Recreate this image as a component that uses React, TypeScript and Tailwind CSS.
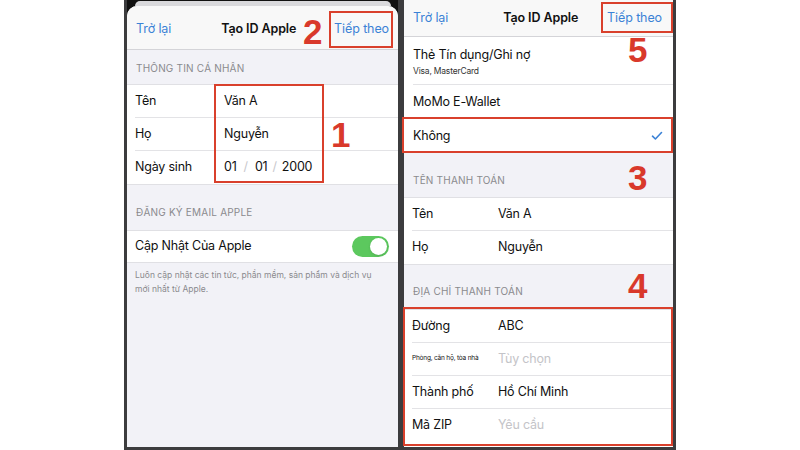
import React from 'react';

const ui = { fontFamily: 'Inter, "Noto Sans", sans-serif' };
const num = { fontFamily: '"Liberation Sans", Arial, sans-serif' };

const Row = ({ label, value, last, labelClass = 'text-[12.5px]', valueClass = 'text-[#111]', valueX = 'w-[89px]' }: any) => (
    <div className="flex h-[33px] items-center pl-[8px]">
        <div className={`flex h-full flex-1 items-center tracking-[-0.2px] ${last ? '' : 'border-b border-[#e3e3e6]'}`}>
            <span className={`${valueX} shrink-0 text-[#111] ${labelClass}`}>{label}</span>
            <span className={`text-[12.5px] ${valueClass}`}>{value}</span>
        </div>
    </div>
);

const Header = ({ text, h, pb }: { text: string; h: string; pb: string }) => (
    <div className={`flex items-end pl-[9px] text-[10px] uppercase tracking-[0.2px] text-[#8a8a8e] ${h} ${pb}`}>{text}</div>
);

const Num = ({ n, className }: { n: string; className: string }) => (
    <span className={`absolute text-[35px] font-bold leading-none text-[#d9392b] ${className}`} style={num}>{n}</span>
);

const Box = ({ className }: { className: string }) => (
    <div className={`absolute border-[2.5px] border-[#d9402c] ${className}`} />
);

const LeftPhone = () => (
    <div className="relative flex h-[450px] w-[277px] flex-col border-b-[3px] border-l-[3px] border-r-[3px] border-[#3c3c3e] bg-[#111]">
        <div className="flex h-[6px] shrink-0 justify-center bg-[#111]">
            <div className="mt-[1px] w-[256px] rounded-t-[8px] bg-[#d9d9dc]" />
        </div>
        <div className="flex flex-1 flex-col overflow-hidden rounded-t-[10px] bg-[#f2f2f7]">
            <div className="flex h-[44px] shrink-0 items-center border-b border-[#d4d4d8] bg-[#f8f8f8] px-[9px] pt-[4px] text-[12.5px] tracking-[-0.1px]">
                <span className="text-[#3b82d6]">Trở lại</span>
                <span className="ml-[50px] font-semibold text-[#111]">Tạo ID Apple</span>
                <span className="ml-auto text-[#3b82d6]">Tiếp theo</span>
            </div>
            <Header text="Thông tin cá nhân" h="h-[34px]" pb="pb-[8px]" />
            <div className="border-y border-[#e0e0e4] bg-white">
                <Row label="Tên" value="Văn A" />
                <Row label="Họ" value="Nguyễn" />
                <Row
                    label="Ngày sinh"
                    last
                    value={
                        <span className="flex items-center">
                            01<span className="mx-[7px] text-[#c8c8cc]">/</span>01<span className="mx-[5px] text-[#c8c8cc]">/</span>2000
                        </span>
                    }
                />
            </div>
            <Header text="Đăng ký email Apple" h="h-[45px]" pb="pb-[10px]" />
            <div className="flex h-[33px] items-center justify-between border-y border-[#e0e0e4] bg-white pl-[8px] pr-[9px]">
                <span className="text-[12.5px] tracking-[-0.2px] text-[#111]">Cập Nhật Của Apple</span>
                <div className="flex h-[21px] w-[37px] items-center justify-end rounded-full bg-[#5cc85e] pr-[2px]">
                    <div className="h-[17px] w-[17px] rounded-full bg-white shadow" />
                </div>
            </div>
            <p className="pl-[8px] pr-[24px] pt-[5px] text-[8.5px] leading-[14px] text-[#8a8a8e]">
                Luôn cập nhật các tin tức, phần mềm, sản phẩm và dịch vụ mới nhất từ Apple.
            </p>
        </div>
        <Num n="2" className="left-[176px] top-[14px]" />
        <Box className="left-[202px] top-[11px] h-[37px] w-[64px]" />
        <Box className="left-[87px] top-[84px] h-[99px] w-[110px]" />
        <Num n="1" className="left-[204px] top-[117px]" />
    </div>
);

const RightPhone = () => (
    <div className="relative flex h-[450px] w-[275px] flex-col border-b-[3px] border-l-[3px] border-r-[3px] border-[#3c3c3e] bg-[#f2f2f7]">
        <div className="flex h-[37px] shrink-0 items-center border-b border-[#d4d4d8] bg-[#f8f8f8] px-[9px] text-[12.5px] tracking-[-0.1px]">
            <span className="text-[#3b82d6]">Trở lại</span>
            <span className="ml-[55px] font-semibold text-[#111]">Tạo ID Apple</span>
            <span className="ml-auto mr-[2px] text-[#3b82d6]">Tiếp theo</span>
        </div>
        <div className="bg-white">
            <div className="flex h-[48px] flex-col justify-center pl-[9px]">
                <div className="flex h-full flex-col justify-center border-b border-[#e3e3e6] pt-[3px] tracking-[-0.2px]">
                    <span className="text-[12.5px] text-[#111]">Thẻ Tín dụng/Ghi nợ</span>
                    <span className="text-[8.5px] text-[#333]">Visa, MasterCard</span>
                </div>
            </div>
            <div className="flex h-[33px] pl-[9px]">
                <div className="flex flex-1 items-center border-b border-[#e3e3e6] pt-[3px] text-[12.5px] tracking-[-0.2px] text-[#111]">MoMo E-Wallet</div>
            </div>
            <div className="flex h-[34px] items-center justify-between border-b border-[#e0e0e4] pl-[9px] pr-[10px] pt-[3px] text-[12.5px] tracking-[-0.2px] text-[#111]">
                <span>Không</span>
                <svg width="12" height="10" viewBox="0 0 12 10" fill="none">
                    <path d="M1.5 5.2 4.4 8 10.5 1.5" stroke="#3b82d6" strokeWidth="1.6" strokeLinecap="round" strokeLinejoin="round" />
                </svg>
            </div>
        </div>
        <Header text="Tên thanh toán" h="h-[45px]" pb="pb-[9px]" />
        <div className="border-y border-[#e0e0e4] bg-white">
            <Row label="Tên" value="Văn A" valueX="w-[86px]" />
            <Row label="Họ" value="Nguyễn" valueX="w-[86px]" last />
        </div>
        <Header text="Địa chỉ thanh toán" h="h-[44px]" pb="pb-[10px]" />
        <div className="flex-1 border-t border-[#e0e0e4] bg-white">
            <Row label="Đường" value="ABC" valueX="w-[86px]" />
            <Row label="Phòng, căn hộ, tòa nhà" labelClass="text-[6.5px]" value="Tùy chọn" valueClass="text-[#c4c4c8]" valueX="w-[86px]" />
            <Row label="Thành phố" value="Hồ Chí Minh" valueX="w-[86px]" />
            <Row label="Mã ZIP" value="Yêu cầu" valueClass="text-[#c4c4c8]" valueX="w-[86px]" last />
        </div>
        <Box className="left-[197px] top-[2px] h-[31px] w-[72px]" />
        <Num n="5" className="left-[224px] top-[32px]" />
        <Box className="-left-[2px] top-[117px] h-[36px] w-[271px]" />
        <Num n="3" className="left-[224px] top-[160px]" />
        <Num n="4" className="left-[224px] top-[268px]" />
        <Box className="-left-[1px] top-[307px] h-[139px] w-[270px]" />
    </div>
);

export default function App() {
    return (
        <div className="flex h-[450px] w-[800px] overflow-hidden bg-white pl-[124px]" style={ui}>
            <LeftPhone />
            <RightPhone />
        </div>
    );
}
